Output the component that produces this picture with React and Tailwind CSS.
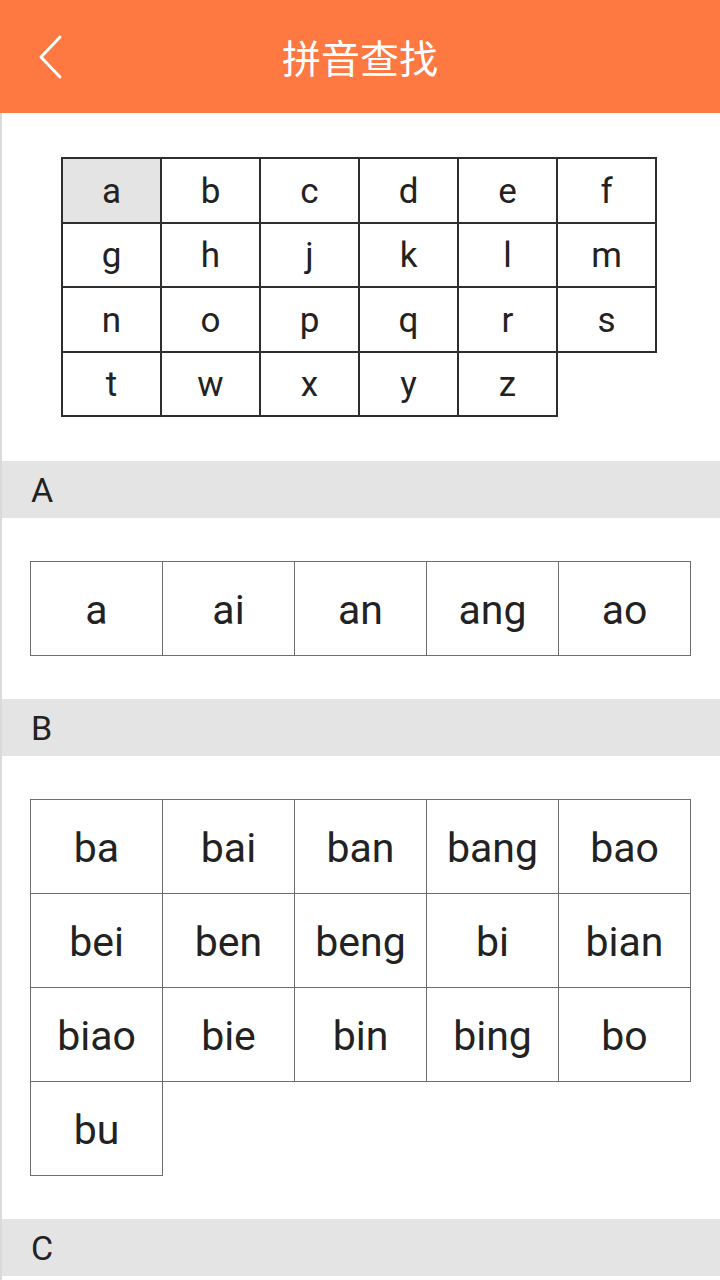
import { Fragment } from 'react';

// Initials shown in the quick-jump table at the top
const initials = [
    'a', 'b', 'c', 'd', 'e', 'f',
    'g', 'h', 'j', 'k', 'l', 'm',
    'n', 'o', 'p', 'q', 'r', 's',
    't', 'w', 'x', 'y', 'z'
];

// Syllables grouped by their first letter
const groups = [
    { letter: 'A', items: ['a', 'ai', 'an', 'ang', 'ao'] },
    {
        letter: 'B',
        items: [
            'ba', 'bai', 'ban', 'bang', 'bao',
            'bei', 'ben', 'beng', 'bi', 'bian',
            'biao', 'bie', 'bin', 'bing', 'bo',
            'bu'
        ]
    },
    { letter: 'C', items: [] }
];

const latin = { fontFamily: 'Roboto, "Noto Sans", sans-serif' };

function TopBar() {
    return (
        <div className="relative flex h-[113px] items-center justify-center bg-[#fe7842]">
            <button className="absolute left-[33px] top-[29px] p-1">
                <svg width="28" height="48" viewBox="0 0 28 48" fill="none">
                    <path d="M23 4 L4 24 L23 44" stroke="white" strokeWidth="3" strokeLinecap="round" strokeLinejoin="round" />
                </svg>
            </button>
            <h1
                className="text-[39px] leading-none text-white"
                style={{ fontFamily: '"Noto Sans CJK SC", "Noto Sans", sans-serif' }}
            >
                拼音查找
            </h1>
        </div>
    );
}

function InitialsTable() {
    return (
        <div className="pl-[59px] pt-[44px] pb-[44px]">
            <div className="grid w-[596px] grid-cols-[repeat(6,99px)] border-t-2 border-l-2 border-[#2e2e2e]">
                {initials.map((ch, i) => (
                    <div
                        key={ch}
                        className={`flex h-[64.5px] items-center justify-center border-r-2 border-b-2 border-[#2e2e2e] pt-[3px] text-[35px] text-[#222] ${i === 0 ? 'bg-[#e4e4e4]' : 'bg-white'}`}
                        style={latin}
                    >
                        {ch}
                    </div>
                ))}
            </div>
        </div>
    );
}

function SectionHeader({ letter }) {
    return (
        <div className="flex h-[57px] items-center bg-[#e4e4e4] pl-[29px] pt-[1px] text-[34px] text-[#222]" style={latin}>
            {letter}
        </div>
    );
}

function SyllableGrid({ items }) {
    if (!items.length) return null;
    return (
        <div className="pl-[28px] py-[43px]">
            <div className="grid w-[661px] grid-cols-[repeat(5,132px)] border-t border-l border-[#6e6e6e]">
                {items.map((s) => (
                    <div
                        key={s}
                        className="flex h-[94px] items-center justify-center border-r border-b border-[#6e6e6e] pt-[4px] text-[41px] text-[#222]"
                        style={latin}
                    >
                        {s}
                    </div>
                ))}
            </div>
        </div>
    );
}

export default function App() {
    return (
        <div className="min-h-[1280px] bg-white">
            <TopBar />
            <div className="min-h-[1167px] border-l-2 border-[#dadada]">
                <InitialsTable />
                {groups.map((g) => (
                    <Fragment key={g.letter}>
                        <SectionHeader letter={g.letter} />
                        <SyllableGrid items={g.items} />
                    </Fragment>
                ))}
            </div>
        </div>
    );
}
